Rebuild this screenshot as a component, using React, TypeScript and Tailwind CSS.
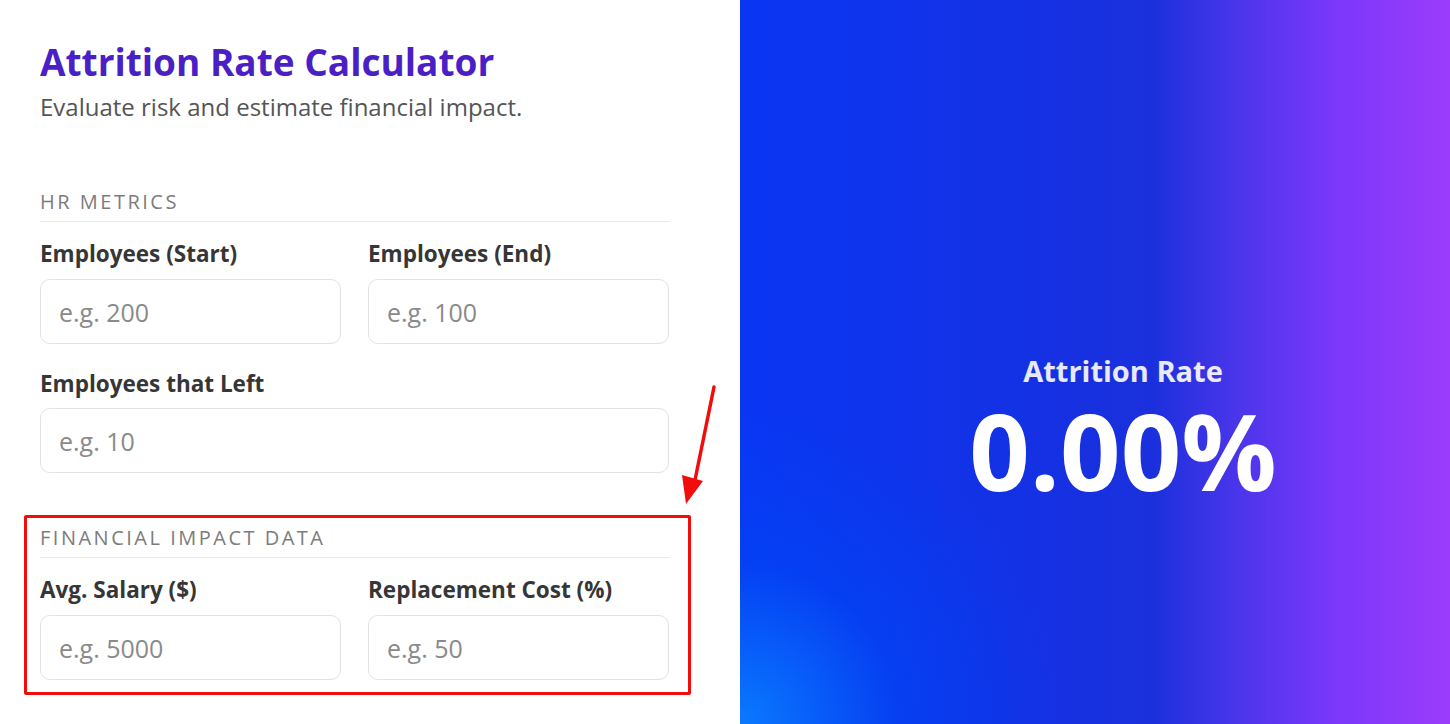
import React from "react";

const font = { fontFamily: '"Open Sans", "Noto Sans", sans-serif' };

function Field({ label, placeholder, gap }: { label: string; placeholder: string; gap: string }) {
  return (
    <div className="flex flex-col">
      <label className="text-[22.5px] leading-[26px] font-bold text-[#363636]">{label}</label>
      <input
        className={`${gap} h-[65px] w-full rounded-[10px] border border-[#e2e2e4] bg-white px-[18px] text-[25px] text-[#333] placeholder:text-[#8a8a8a] outline-none`}
        placeholder={placeholder}
      />
    </div>
  );
}

function SectionTitle({ children }: { children: React.ReactNode }) {
  return (
    <div className="border-b border-[#e6e6ea] pb-[6px] text-[20px] leading-[26px] tracking-[2.5px] text-[#7c7c7c] uppercase">
      {children}
    </div>
  );
}

export default function App() {
  return (
    <div className="flex h-[724px] w-[1450px] overflow-hidden bg-white" style={font}>
      <div className="relative w-[740px] shrink-0 bg-white px-[40px] pt-[40px]">
        <div className="w-[629px]">
          <h1 className="text-[37px] leading-[44px] font-bold text-[#4b1fc6]">Attrition Rate Calculator</h1>
          <p className="mt-[8px] text-[24px] leading-[30px] text-[#555555]">Evaluate risk and estimate financial impact.</p>

          <div className="mt-[67px]">
            <SectionTitle>HR Metrics</SectionTitle>
            <div className="mt-[19px] grid grid-cols-2 gap-x-[27px]">
              <Field label="Employees (Start)" placeholder="e.g. 200" gap="mt-[12px]" />
              <Field label="Employees (End)" placeholder="e.g. 100" gap="mt-[12px]" />
            </div>
            <div className="mt-[27px]">
              <Field label="Employees that Left" placeholder="e.g. 10" gap="mt-[11px]" />
            </div>
          </div>

          <div className="relative mt-[52px]">
            <SectionTitle>Financial Impact Data</SectionTitle>
            <div className="mt-[19px] grid grid-cols-2 gap-x-[27px]">
              <Field label="Avg. Salary ($)" placeholder="e.g. 5000" gap="mt-[12px]" />
              <Field label="Replacement Cost (%)" placeholder="e.g. 50" gap="mt-[12px]" />
            </div>
            <div className="pointer-events-none absolute -top-[10px] -bottom-[15px] -left-[16px] -right-[22px] rounded-[2px] border-[3px] border-[#f20d0d]" />
          </div>
        </div>

        <svg className="pointer-events-none absolute left-[676px] top-[380px]" width="44" height="130" viewBox="0 0 44 130">
          <line x1="38" y1="7" x2="19" y2="100" stroke="#f20d0d" strokeWidth="3.5" strokeLinecap="round" />
          <polygon points="6,95 27,101 10,124" fill="#f20d0d" />
        </svg>
      </div>

      <div className="flex flex-1 flex-col items-center justify-start bg-[radial-gradient(circle_at_0%_100%,rgba(10,125,255,0.95)_0px,rgba(0,70,245,0.6)_160px,rgba(0,60,240,0)_320px),linear-gradient(to_right,#0a36f3_0%,#1431e4_40%,#1a30dc_58%,#4a35ea_70%,#7b38fb_84%,#9c3cfa_100%)] pt-[354px] pl-[56px]">
        <div className="text-[29px] leading-[34px] font-bold text-white/90">Attrition Rate</div>
        <div className="mt-[10px] text-[106px] leading-[104px] font-bold text-white">0.00%</div>
      </div>
    </div>
  );
}
